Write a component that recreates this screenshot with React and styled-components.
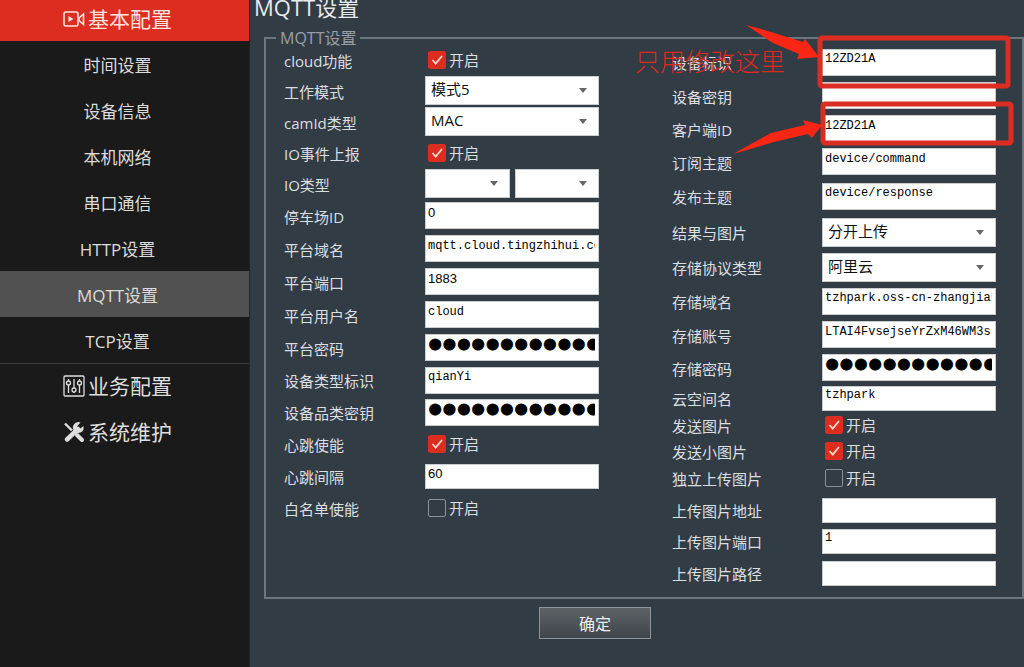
import React from "react";
import styled, { createGlobalStyle, css } from "styled-components";

const GlobalStyle = createGlobalStyle`
    * {
        box-sizing: border-box;
    }
    body {
        margin: 0;
        background: #323c45;
        font-family: "Open Sans", "Noto Sans CJK SC", sans-serif;
        color: #dcdfe2;
    }
    `;

const Page = styled.div`
    display: flex;
    min-height: 100vh;
    `;
const Sidebar = styled.nav`
    flex: none;
    width: 250px;
    background: #1a1a1a;
    border-right: 1px solid #20252b;
    `;
const GroupLink = styled.a`
    display: flex;
    align-items: center;
    justify-content: center;
    gap: 3px;
    height: ${(props) => (props.$active ? "41px" : "46px")};
    padding: 0 14px 3px 0;
    background: ${(props) => (props.$active ? "#dc2d20" : "transparent")};
    color: ${(props) => (props.$active ? "#fbe3df" : "#dedede")};
    font-size: 21px;
    line-height: 24px;
    text-decoration: none;
    `;
const SubMenu = styled.div`
    border-bottom: 1px solid #35373a;
    `;
const SubLink = styled.a`
    display: flex;
    align-items: center;
    justify-content: center;
    height: 46px;
    padding: 3px 14px 0 0;
    background: ${(props) => (props.$active ? "#515151" : "transparent")};
    color: #dcdcdc;
    font-size: 17px;
    line-height: 20px;
    text-decoration: none;
    `;
const GroupIcon = styled.svg`
    flex: none;
    width: 22px;
    height: 22px;
    `;

const Main = styled.main`
    flex: 1;
    min-width: 0;
    `;
const Title = styled.h1`
    margin: 0 0 17px 4px;
    color: #e8eaec;
    font-size: 22px;
    font-weight: 400;
    line-height: 14px;
    `;
const Group = styled.fieldset`
    margin: 0 0 0 14px;
    padding: 0 26px 5px 18px;
    border: 2px solid #6d767d;
    min-width: 0;
    `;
const Legend = styled.legend`
    margin-left: -8px;
    padding: 0 4px;
    color: #98a0a7;
    font-size: 16px;
    line-height: 14px;
    `;
const Columns = styled.div`
    display: grid;
    grid-template-columns: 1fr 324px;
    `;
const Column = styled.div`
    position: relative;
    `;
const Row = styled.div`
    display: grid;
    grid-template-columns: ${(props) => props.$label}px 174px;
    align-items: center;
    height: ${(props) => props.$height}px;
    `;
const Label = styled.label`
    padding-top: 2px;
    font-size: 15px;
    line-height: 20px;
    white-space: nowrap;
    `;

const box = css`
    width: 100%;
    border: 1px solid #c9cdd0;
    border-radius: 0;
    background: #fff;
    color: #111;
    `;
const TextBox = styled.input`
    ${box}
    height: ${(props) => (props.$short ? "25px" : "27px")};
    padding: 0 3px 6px 2px;
    color: #000;
    font-family: ${(props) => (props.$number ? '"Liberation Sans", sans-serif' : '"Liberation Mono", monospace')};
    font-size: ${(props) => (props.$number ? "13px" : "12px")};
    `;
const SecretBox = styled.input`
    ${box}
    height: 27px;
    padding: 0 3px 6px 2px;
    color: #000;
    font-family: "Liberation Sans", sans-serif;
    font-size: 41px;
    -webkit-text-stroke: 1px #000;
    `;
const Select = styled.select`
    ${box}
    height: 29px;
    padding: 0 20px 3px 5px;
    appearance: none;
    font-family: inherit;
    font-size: 15px;
    background: #fff url("data:image/svg+xml,%3Csvg xmlns='http://www.w3.org/2000/svg' width='8' height='5'%3E%3Cpath d='M0 0h8L4 5z' fill='%23666'/%3E%3C/svg%3E") no-repeat right 11px center;
    `;
const SelectPair = styled.div`
    display: grid;
    grid-template-columns: 1fr 1fr;
    gap: 5px;
    `;
const Check = styled.label`
    display: flex;
    align-items: center;
    gap: 3px;
    padding-left: 3px;
    font-size: 15px;
    line-height: 20px;
    `;
const CheckBox = styled.input`
    appearance: none;
    width: 18px;
    height: 18px;
    margin: 0;
    border: 1px solid #8a9299;
    border-radius: 2px;
    &:checked {
        border-color: #dc2d20;
        background: #dc2d20 url("data:image/svg+xml,%3Csvg xmlns='http://www.w3.org/2000/svg' width='16' height='16'%3E%3Cpath d='M3.5 8l3.2 3.6L13 4' fill='none' stroke='%23fbd9c8' stroke-width='1.8'/%3E%3C/svg%3E") no-repeat center;
    }
    `;

const Actions = styled.div`
    display: flex;
    justify-content: center;
    padding: 8px 84px 27px 0;
    `;
const Submit = styled.button`
    width: 112px;
    height: 32px;
    border: 1px solid #8d969c;
    background: linear-gradient(#5d6266, #3f464c);
    color: #eef0f1;
    font-family: inherit;
    font-size: 16px;
    `;

const Marks = styled.svg`
    position: absolute;
    top: -25px;
    right: -18px;
    width: 384px;
    height: 145px;
    pointer-events: none;
    `;

const leftRows = [
    { label: "cloud功能", type: "check", checked: true, height: 30 },
    { label: "工作模式", type: "select", value: "模式5", height: 31 },
    { label: "camId类型", type: "select", value: "MAC", height: 31 },
    { label: "IO事件上报", type: "check", checked: true, height: 31 },
    { label: "IO类型", type: "pair", height: 31 },
    { label: "停车场ID", type: "number", value: "0", height: 33 },
    { label: "平台域名", type: "text", value: "mqtt.cloud.tingzhihui.com", height: 33 },
    { label: "平台端口", type: "number", value: "1883", height: 33 },
    { label: "平台用户名", type: "text", value: "cloud", height: 33 },
    { label: "平台密码", type: "secret", height: 33 },
    { label: "设备类型标识", type: "text", value: "qianYi", height: 32 },
    { label: "设备品类密钥", type: "secret", height: 32 },
    { label: "心跳使能", type: "check", checked: true, height: 32 },
    { label: "心跳间隔", type: "number", value: "60", short: true, height: 32 },
    { label: "白名单使能", type: "check", height: 32 },
];

const rightRows = [
    { label: "设备标识", type: "text", value: "12ZD21A", height: 34 },
    { label: "设备密钥", type: "text", value: "", height: 33 },
    { label: "客户端ID", type: "text", value: "12ZD21A", height: 33 },
    { label: "订阅主题", type: "text", value: "device/command", height: 33 },
    { label: "发布主题", type: "text", value: "device/response", height: 36 },
    { label: "结果与图片", type: "select", value: "分开上传", height: 36 },
    { label: "存储协议类型", type: "select", value: "阿里云", height: 34 },
    { label: "存储域名", type: "text", value: "tzhpark.oss-cn-zhangjiakou", height: 34 },
    { label: "存储账号", type: "text", value: "LTAI4FvsejseYrZxM46WM3s", height: 33 },
    { label: "存储密码", type: "secret", height: 33 },
    { label: "云空间名", type: "text", value: "tzhpark", short: true, height: 28 },
    { label: "发送图片", type: "check", checked: true, height: 26 },
    { label: "发送小图片", type: "check", checked: true, height: 26 },
    { label: "独立上传图片", type: "check", height: 28 },
    { label: "上传图片地址", type: "text", value: "", short: true, height: 36 },
    { label: "上传图片端口", type: "text", value: "1", short: true, height: 26 },
    { label: "上传图片路径", type: "text", value: "", short: true, height: 38 },
];

const subItems = ["时间设置", "设备信息", "本机网络", "串口通信", "HTTP设置", "MQTT设置", "TCP设置"];

function Control({ id, row }) {
    if (row.type === "check") {
        return (
            <Check>
                <CheckBox id={id} type="checkbox" defaultChecked={row.checked} />
                开启
            </Check>
        );
    }
    if (row.type === "select") {
        return (
            <Select id={id}>
                <option>{row.value}</option>
            </Select>
        );
    }
    if (row.type === "pair") {
        return (
            <SelectPair>
                <Select id={id} />
                <Select aria-label={row.label + "2"} />
            </SelectPair>
        );
    }
    if (row.type === "secret") {
        return <SecretBox id={id} type="password" defaultValue="123456789012" />;
    }
    return <TextBox id={id} type="text" defaultValue={row.value} $short={row.short} $number={row.type === "number"} />;
}

function Rows({ name, rows, label }) {
    return rows.map((row, i) => (
        <Row key={row.label} $height={row.height} $label={label}>
            <Label htmlFor={name + i}>{row.label}</Label>
            <Control id={name + i} row={row} />
        </Row>
    ));
}

function App() {
    return (
        <Page>
            <GlobalStyle />
            <Sidebar>
                <GroupLink href="#basic" $active>
                    <GroupIcon viewBox="0 0 22 22" fill="none" stroke="currentColor" strokeWidth="1.6">
                        <rect x="1" y="4" width="14" height="14" rx="2" />
                        <path d="M16 10l4.500-4v10.500l-4.500-4z" />
                        <path d="M5.500 8v6l5-3z" fill="currentColor" stroke="none" />
                    </GroupIcon>
                    基本配置
                </GroupLink>
                <SubMenu>
                    {subItems.map((item) => (
                        <SubLink key={item} href={"#" + item} $active={item === "MQTT设置"}>{item}</SubLink>
                    ))}
                </SubMenu>
                <GroupLink href="#business">
                    <GroupIcon viewBox="0 0 22 22" fill="none" stroke="currentColor" strokeWidth="1.3">
                        <rect x="1" y="1" width="20" height="20" rx="1" />
                        <path d="M5.500 4v2M5.500 10v8M11 4v9M11 17v1M16.500 4v2M16.500 10v8" />
                        <circle cx="5.500" cy="8" r="2" />
                        <circle cx="11" cy="15" r="2" />
                        <circle cx="16.500" cy="8" r="2" />
                    </GroupIcon>
                    业务配置
                </GroupLink>
                <GroupLink href="#system">
                    <GroupIcon viewBox="0 0 22 22" fill="none" stroke="currentColor">
                        <path d="M4 18.500L15 8" strokeWidth="4.500" strokeLinecap="round" />
                        <path d="M20.500 5l-4 3-2.500-2.500L17.500 1.500a5.500 5.500 0 1 0 3 7z" fill="currentColor" stroke="none" />
                        <path d="M2 2.500l7 7" strokeWidth="2.400" />
                        <path d="M14 14l5 5" strokeWidth="4" strokeLinecap="round" />
                    </GroupIcon>
                    系统维护
                </GroupLink>
            </Sidebar>
            <Main>
                <Title>MQTT设置</Title>
                <Group>
                    <Legend>MQTT设置</Legend>
                    <Columns>
                        <Column>
                            <Rows name="left" rows={leftRows} label={141} />
                        </Column>
                        <Column>
                            <Rows name="right" rows={rightRows} label={150} />
                            <Marks viewBox="630 20 384 145" fill="none">
                                <text x="635" y="71" fill="#dc2a1e" fontSize="25" fontWeight="300">只用修改这里</text>
                                <rect x="820" y="38" width="188" height="48" rx="2" stroke="#dc2d22" strokeWidth="5" />
                                <rect x="823" y="104" width="188" height="39" rx="2" stroke="#dc2d22" strokeWidth="5" />
                                <path d="M746 25l15 4 42 13 2-3 14 18-22 2 2-5-26-11z" fill="#fb2613" />
                                <path d="M733 154l38-21 34-8-2-5 19 5-10 13-4-4-34 8z" fill="#fb2613" />
                            </Marks>
                        </Column>
                    </Columns>
                </Group>
                <Actions>
                    <Submit type="button">确定</Submit>
                </Actions>
            </Main>
        </Page>
    );
}

export default App;
